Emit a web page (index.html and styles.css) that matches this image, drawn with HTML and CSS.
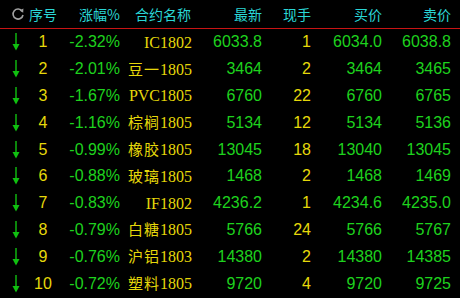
FILE: index.html
```html
<!DOCTYPE html>
<html lang="zh-CN">
<head>
  <meta charset="UTF-8" />
  <title>行情</title>
  <link rel="stylesheet" href="styles.css">
</head>
<body>
  <div class="quote">
    <div class="row head">
      <div class="cell icon">
        <svg width="14" height="14" viewBox="0 0 14 14">
          <path d="M11.2 4.2 A5 5 0 1 0 12 8" fill="none" stroke="#a0a0a0" stroke-width="1.6"/>
          <path d="M8.6 3.6 L12.4 1.6 L12.2 5.8 Z" fill="#a0a0a0"/>
        </svg>
      </div>
      <div class="cell seq">序号</div>
      <div class="cell num">涨幅%</div>
      <div class="cell name">合约名称</div>
      <div class="cell num">最新</div>
      <div class="cell num">现手</div>
      <div class="cell num">买价</div>
      <div class="cell num">卖价</div>
    </div>

    <div id="rows"></div>
  </div>

  <script>
    var data = [
      [1, '-2.32%', '', 'IC1802', '6033.8', 1, '6034.0', '6038.8'],
      [2, '-2.01%', '豆一', '1805', '3464', 2, '3464', '3465'],
      [3, '-1.67%', '', 'PVC1805', '6760', 22, '6760', '6765'],
      [4, '-1.16%', '棕榈', '1805', '5134', 12, '5134', '5136'],
      [5, '-0.99%', '橡胶', '1805', '13045', 18, '13040', '13045'],
      [6, '-0.88%', '玻璃', '1805', '1468', 2, '1468', '1469'],
      [7, '-0.83%', '', 'IF1802', '4236.2', 1, '4234.6', '4235.0'],
      [8, '-0.79%', '白糖', '1805', '5766', 24, '5766', '5767'],
      [9, '-0.76%', '沪铝', '1803', '14380', 2, '14380', '14385'],
      [10, '-0.72%', '塑料', '1805', '9720', 4, '9720', '9725']
    ];

    var arrow = '<svg width="8" height="18" viewBox="0 0 8 18">' +
      '<path d="M4 0 V16" stroke="#10c010" stroke-width="1.4"/>' +
      '<path d="M0.5 11 L4 17.5 L7.5 11 Z" fill="#10c010"/></svg>';

    var html = '';
    data.forEach(function(d) {
      html += '<div class="row">' +
        '<div class="cell icon">' + arrow + '</div>' +
        '<div class="cell seq yellow">' + d[0] + '</div>' +
        '<div class="cell num green">' + d[1] + '</div>' +
        '<div class="cell name yellow"><span class="cn">' + d[2] + '</span><span class="code">' + d[3] + '</span></div>' +
        '<div class="cell num green">' + d[4] + '</div>' +
        '<div class="cell num yellow">' + d[5] + '</div>' +
        '<div class="cell num green">' + d[6] + '</div>' +
        '<div class="cell num green">' + d[7] + '</div>' +
        '</div>';
    });
    document.getElementById('rows').innerHTML = html;
  </script>
</body>
</html>
```

FILE: styles.css
```css
* { margin: 0; padding: 0; box-sizing: border-box; }

body {
  background: #000;
  width: 460px;
  height: 298px;
  overflow: hidden;
  font-family: 'Liberation Sans', 'Noto Sans CJK SC', sans-serif;
}

.quote {
  display: flex;
  flex-direction: column;
}

.row {
  display: grid;
  grid-template-columns: 30px 26px 64px 71px 71px 49px 71px 69px;
  align-items: center;
  height: 26.8px;
  font-size: 16px;
}

.head {
  height: 29px;
  padding-bottom: 1px;
  border-bottom: 1px solid #c81414;
  color: #2ad6d6;
  font-family: 'Noto Sans CJK SC', sans-serif;
  font-size: 14px;
}

.cell {
  white-space: nowrap;
  line-height: 1;
}

.icon {
  display: flex;
  justify-content: center;
  padding-left: 1px;
}

.head .icon {
  justify-content: flex-end;
  padding-right: 5px;
}

.seq {
  text-align: center;
}

.head .seq {
  text-align: left;
  margin-left: -1px;
}

.num, .name {
  text-align: right;
}

.name .cn {
  font-family: 'Noto Sans CJK SC', sans-serif;
  font-size: 15px;
  letter-spacing: 1px;
}

.code {
  font-family: 'Liberation Serif', serif;
  font-size: 16px;
  margin-right: -1px;
}

.green {
  color: #1ed21e;
}

.yellow {
  color: #e6d80a;
}
```
